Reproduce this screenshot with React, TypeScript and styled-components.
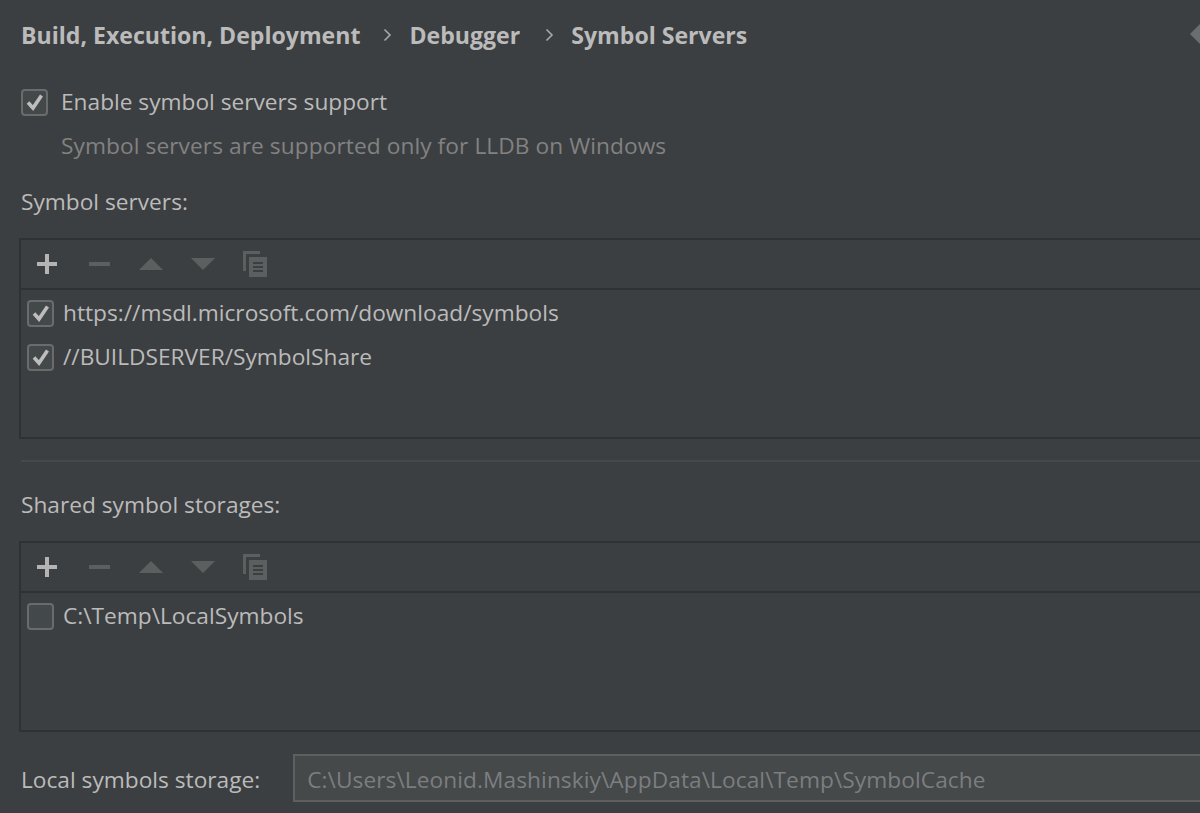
import styled, { createGlobalStyle } from 'styled-components'

const GlobalStyle = createGlobalStyle`
  html, body {
    margin: 0;
    height: 100%;
    overflow: hidden;
    background: #3c3f41;
  }
`

const Page = styled.div`
  width: 1200px;
  height: 813px;
  overflow: hidden;
  box-sizing: border-box;
  padding: 0 0 0 21px;
  background: #3c3f41;
  color: #bbbbbb;
  font-family: 'Open Sans', 'Noto Sans', sans-serif;
  font-size: 22.7px;
  display: flex;
  flex-direction: column;
`

const Breadcrumb = styled.div`
  height: 72px;
  box-sizing: border-box;
  padding-bottom: 2px;
  display: flex;
  align-items: center;
  font-weight: 700;
  font-size: 23.1px;
  color: #bbbbbb;
  position: relative;
`

const Crumb = styled.span`
  white-space: nowrap;
`

const CrumbArrow = styled.svg<{ $left: number }>`
  width: 9px;
  height: 14px;
  margin: 0 17px 0 ${(p) => p.$left}px;
  fill: none;
  stroke: #a8a8a8;
  stroke-width: 1.6;
`

const BackArrow = styled.svg`
  position: absolute;
  right: 0;
  top: 24px;
  width: 10px;
  height: 20px;
  fill: #6b6e70;
`

const CheckRow = styled.label`
  display: flex;
  align-items: center;
  gap: 13px;
  height: 44px;
  margin-top: 8px;
  white-space: nowrap;
`

const Box = styled.span`
  width: 27px;
  height: 27px;
  box-sizing: border-box;
  flex: none;
  border: 2px solid #6b6b6b;
  border-radius: 4px;
  background: #43494a;
  display: flex;
  align-items: center;
  justify-content: center;
`

const RowText = styled.span`
  margin-bottom: 2px;
`

const Hint = styled.div`
  margin-left: 40px;
  height: 44px;
  line-height: 44px;
  color: #828282;
  letter-spacing: 0.08px;
  white-space: nowrap;
`

const SectionLabel = styled.div<{ $top: number }>`
  height: 44px;
  line-height: 44px;
  margin-top: ${(p) => p.$top}px;
  white-space: nowrap;
`

const ListPanel = styled.div<{ $top: number; $height: number }>`
  margin-top: ${(p) => p.$top}px;
  margin-left: -2px;
  height: ${(p) => p.$height}px;
  box-sizing: border-box;
  border: 2px solid #2f3133;
  border-right: none;
  display: flex;
  flex-direction: column;
`

const Toolbar = styled.div`
  height: 50px;
  flex: none;
  box-sizing: border-box;
  border-bottom: 2px solid #2f3133;
  display: flex;
  align-items: center;
  padding-left: 10px;
  gap: 12px;
`

const ToolIcon = styled.svg<{ $nudge?: number }>`
  width: 40px;
  height: 28px;
  flex: none;
  margin-left: ${(p) => p.$nudge ?? 0}px;
`

const Rows = styled.div`
  padding-top: 1px;
  display: flex;
  flex-direction: column;
`

const ListRow = styled.div`
  display: flex;
  align-items: center;
  gap: 9px;
  height: 44px;
  padding-left: 6px;
  white-space: nowrap;
`

const Divider = styled.div`
  height: 2px;
  margin-top: 21px;
  background: #46494b;
`

const StorageRow = styled.div`
  display: flex;
  align-items: center;
  margin-top: 22px;
  gap: 33px;
  white-space: nowrap;
`

const StorageLabel = styled.span`
  padding-top: 2px;
`

const StorageInput = styled.div`
  flex: 1;
  height: 48px;
  box-sizing: border-box;
  border: 2px solid #5e6060;
  border-right: none;
  background: #45494a;
  padding-left: 12px;
  line-height: 47px;
  letter-spacing: 0.07px;
  color: #7c7e80;
  overflow: hidden;
`

const Check = () => (
  <svg width="20" height="20" viewBox="0 0 20 20" fill="none" stroke="#bdbdbd" strokeWidth="3.6">
    <path d="M3 10.5 L8 16 L16.5 3.5" />
  </svg>
)

const CheckBox = ({ checked }: { checked?: boolean }) => <Box>{checked && <Check />}</Box>

const ListToolbar = () => (
  <Toolbar>
    <ToolIcon viewBox="0 0 40 28">
      <path d="M14 4h4v8h8v4h-8v8h-4v-8H6v-4h8z" fill="#b4b4b4" />
    </ToolIcon>
    <ToolIcon viewBox="0 0 40 28" $nudge={3}>
      <rect x="3" y="12" width="21" height="4" fill="#5c5f60" />
    </ToolIcon>
    <ToolIcon viewBox="0 0 40 28">
      <path d="M1 20 L13 8 L25 20 Z" fill="#5c5f60" />
    </ToolIcon>
    <ToolIcon viewBox="0 0 40 28">
      <path d="M1 8 L25 8 L13 20 Z" fill="#5c5f60" />
    </ToolIcon>
    <ToolIcon viewBox="0 0 40 28">
      <path d="M1 1h17v3H4v17H1z" fill="#5c5f60" />
      <path d="M7 7h18v20H7z" fill="#5c5f60" />
      <path d="M11 12h10v2H11zM11 16h10v2H11zM11 20h10v2H11z" fill="#3c3f41" />
    </ToolIcon>
  </Toolbar>
)

export default function App() {
  return (
    <Page>
      <GlobalStyle />
      <Breadcrumb>
        <Crumb>Build, Execution, Deployment</Crumb>
        <CrumbArrow $left={23} viewBox="0 0 9 14"><path d="M1.5 1.5 L7 7 L1.5 12.5" /></CrumbArrow>
        <Crumb>Debugger</Crumb>
        <CrumbArrow $left={25} viewBox="0 0 9 14"><path d="M1.5 1.5 L7 7 L1.5 12.5" /></CrumbArrow>
        <Crumb>Symbol Servers</Crumb>
        <BackArrow viewBox="0 0 10 20"><path d="M10 0 L0 10 L10 20 Z" /></BackArrow>
      </Breadcrumb>

      <CheckRow>
        <CheckBox checked />
        <RowText>Enable symbol servers support</RowText>
      </CheckRow>
      <Hint>Symbol servers are supported only for LLDB on Windows</Hint>

      <SectionLabel $top={12}>Symbol servers:</SectionLabel>
      <ListPanel $top={14} $height={201}>
        <ListToolbar />
        <Rows>
          <ListRow><CheckBox checked /><RowText>https://msdl.microsoft.com/download/symbols</RowText></ListRow>
          <ListRow><CheckBox checked /><RowText>//BUILDSERVER/SymbolShare</RowText></ListRow>
        </Rows>
      </ListPanel>

      <Divider />

      <SectionLabel $top={21}>Shared symbol storages:</SectionLabel>
      <ListPanel $top={14} $height={191}>
        <ListToolbar />
        <Rows>
          <ListRow><CheckBox /><RowText>C:\Temp\LocalSymbols</RowText></ListRow>
        </Rows>
      </ListPanel>

      <StorageRow>
        <StorageLabel>Local symbols storage:</StorageLabel>
        <StorageInput>C:\Users\Leonid.Mashinskiy\AppData\Local\Temp\SymbolCache</StorageInput>
      </StorageRow>
    </Page>
  )
}
